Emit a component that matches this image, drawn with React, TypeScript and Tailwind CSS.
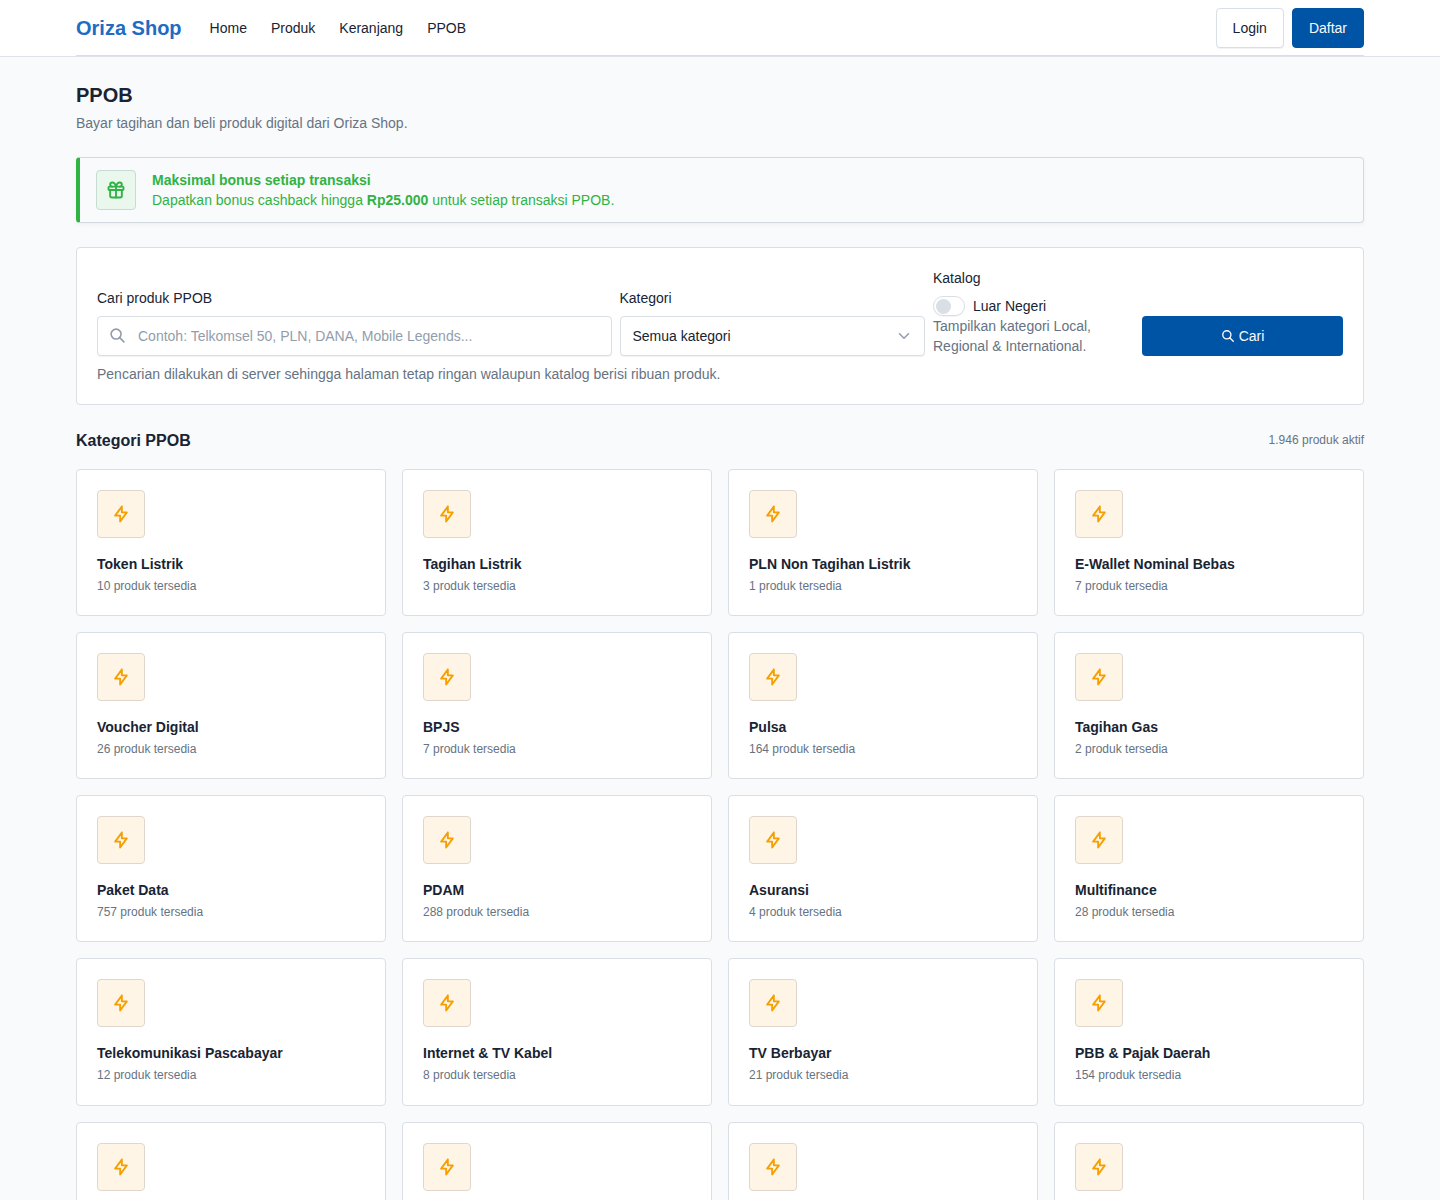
import { TbBolt, TbGift, TbSearch } from 'react-icons/tb';

const navLinks = ['Home', 'Produk', 'Keranjang', 'PPOB'];

const categories = [
  { name: 'Token Listrik', count: 10 },
  { name: 'Tagihan Listrik', count: 3 },
  { name: 'PLN Non Tagihan Listrik', count: 1 },
  { name: 'E-Wallet Nominal Bebas', count: 7 },
  { name: 'Voucher Digital', count: 26 },
  { name: 'BPJS', count: 7 },
  { name: 'Pulsa', count: 164 },
  { name: 'Tagihan Gas', count: 2 },
  { name: 'Paket Data', count: 757 },
  { name: 'PDAM', count: 288 },
  { name: 'Asuransi', count: 4 },
  { name: 'Multifinance', count: 28 },
  { name: 'Telekomunikasi Pascabayar', count: 12 },
  { name: 'Internet & TV Kabel', count: 8 },
  { name: 'TV Berbayar', count: 21 },
  { name: 'PBB & Pajak Daerah', count: 154 },
];

// cards of the row below the fold, only their icons are in view
const nextRow = [1, 2, 3, 4];

function Header() {
  return (
    <header className="bg-white border-b border-[#dfe2e8]">
      <div className="w-[1288px] h-14 mx-auto flex items-center shadow-[inset_0_-1px_0_0_#dadfe5]">
        <a href="#" className="text-xl font-bold text-[#206bc4]">Oriza Shop</a>
        <nav className="flex gap-6 ml-7">
          {navLinks.map((link) => (
            <a key={link} href="#">{link}</a>
          ))}
        </nav>
        <div className="flex gap-2 ml-auto">
          <a href="#" className="h-10 px-4 flex items-center rounded border border-[#dadfe5] bg-white shadow-[0_1px_1px_0_rgba(24,36,51,0.06)]">
            Login
          </a>
          <a href="#" className="h-10 px-4 flex items-center rounded border border-[#0054a6] bg-[#0054a6] text-[#f9fafc]">
            Daftar
          </a>
        </div>
      </div>
    </header>
  );
}

function BonusAlert() {
  return (
    <div className="mt-6 flex items-center gap-4 px-4 py-3 rounded border border-l-4 border-[#d4d8df] border-l-[#2fb344] text-[#2fb344] shadow-[0_2px_4px_0_rgba(24,36,51,0.04)]">
      <span className="size-10 flex items-center justify-center rounded border border-[#c6dcd2] bg-[#eaf7ec]">
        <TbGift size={20} strokeWidth={2.25} />
      </span>
      <div>
        <div className="font-bold">Maksimal bonus setiap transaksi</div>
        <div>
          Dapatkan bonus cashback hingga <strong className="font-bold">Rp25.000</strong> untuk setiap transaksi PPOB.
        </div>
      </div>
    </div>
  );
}

function SearchForm() {
  return (
    <form className="mt-6 p-5 rounded border border-[#dadfe5] bg-white">
      <div className="grid grid-cols-12 gap-2 items-end">
        <div className="col-span-5">
          <label className="block mb-2">Cari produk PPOB</label>
          <div className="relative">
            <TbSearch size={17} strokeWidth={2.25} className="absolute left-[11.7px] top-[10.5px] text-[#929dab]" />
            <input
              type="text"
              placeholder="Contoh: Telkomsel 50, PLN, DANA, Mobile Legends..."
              className="block w-full h-10 pl-10 pr-3 rounded border border-[#dadfe5] bg-white placeholder:text-[#929dab] shadow-[0_1px_1px_0_rgba(24,36,51,0.06)]"
            />
          </div>
        </div>

        <div className="col-span-3">
          <label className="block mb-2">Kategori</label>
          <div className="relative">
            <select className="block w-full h-10 px-3 appearance-none rounded border border-[#dadfe5] bg-white shadow-[0_1px_1px_0_rgba(24,36,51,0.06)]">
              <option>Semua kategori</option>
            </select>
            <svg
              viewBox="0 0 16 16"
              className="absolute right-[15px] top-[14px] size-3 text-[#929dab]"
              fill="none"
              stroke="currentColor"
              strokeWidth="2"
              strokeLinecap="round"
              strokeLinejoin="round"
            >
              <path d="m2 5 6 6 6-6" />
            </svg>
          </div>
        </div>

        <div className="col-span-2">
          <div className="mb-2">Katalog</div>
          <label className="flex items-center gap-2">
            <span className="w-8 h-5 pl-0.5 flex items-center rounded-full border border-[#dadfe5] bg-white shadow-[0_1px_1px_0_rgba(24,36,51,0.06)]">
              <span className="size-[15px] rounded-full bg-[#dadfe5]" />
            </span>
            Luar Negeri
          </label>
          <div className="text-[#667382]">Tampilkan kategori Local, Regional &amp; International.</div>
        </div>

        <button type="button" className="col-span-2 h-10 flex items-center justify-center gap-1 rounded bg-[#0054a6] text-[#f9fafc]">
          <TbSearch size={14} strokeWidth={2.4} />
          Cari
        </button>
      </div>
      <div className="mt-2 text-[#667382]">
        Pencarian dilakukan di server sehingga halaman tetap ringan walaupun katalog berisi ribuan produk.
      </div>
    </form>
  );
}

function CategoryIcon() {
  return (
    <span className="size-12 mb-4 flex items-center justify-center rounded border border-[#dfd7cd] bg-[#fef5e6] text-[#f59f00]">
      <TbBolt size={20} strokeWidth={2.25} />
    </span>
  );
}

export default function App() {
  return (
    <div className="h-[1200px] overflow-hidden bg-[#f9fafc] text-sm leading-5 text-[#182433] font-['Liberation_Sans',Arial,sans-serif]">
      <Header />
      <main className="w-[1288px] mx-auto pt-6">
        <h1 className="text-xl leading-7 font-bold">PPOB</h1>
        <p className="mt-1 text-[#667382]">Bayar tagihan dan beli produk digital dari Oriza Shop.</p>

        <BonusAlert />
        <SearchForm />

        <div className="mt-6 mb-4 flex items-center justify-between">
          <h2 className="text-base leading-6 font-bold">Kategori PPOB</h2>
          <span className="pb-0.5 text-xs text-[#667382]">1.946 produk aktif</span>
        </div>

        <div className="grid grid-cols-4 gap-4">
          {categories.map((category) => (
            <a key={category.name} href="#" className="block p-5 rounded border border-[#dadfe5] bg-white">
              <CategoryIcon />
              <div className="font-bold">{category.name}</div>
              <div className="mt-1 text-xs leading-[17.14px] text-[#667382]">{category.count} produk tersedia</div>
            </a>
          ))}
          {nextRow.map((n) => (
            <a key={n} href="#" className="block h-[147px] p-5 rounded border border-[#dadfe5] bg-white">
              <CategoryIcon />
            </a>
          ))}
        </div>
      </main>
    </div>
  );
}
